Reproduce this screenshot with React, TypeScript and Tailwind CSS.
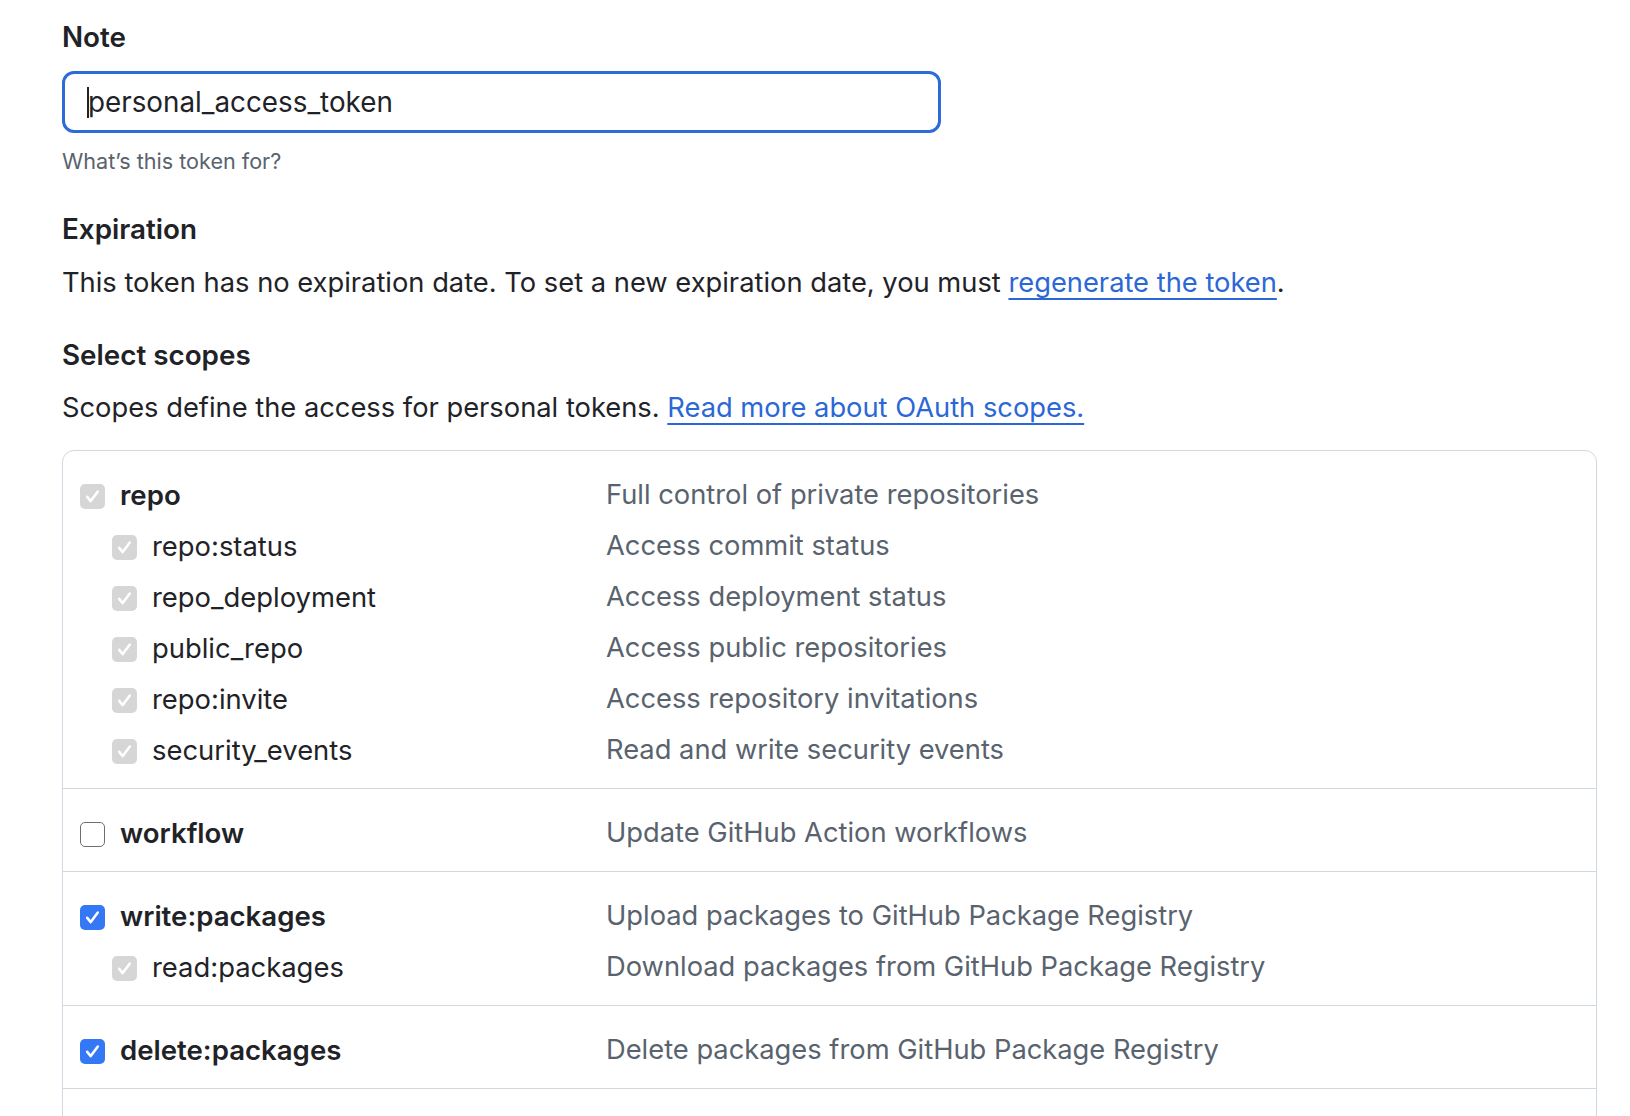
import React from 'react'

type CheckState = 'checked' | 'unchecked' | 'disabled'

type Scope = {
  name: string
  description: string
  state: CheckState
  children?: { name: string; description: string }[]
}

const scopes: Scope[] = [
  {
    name: 'repo',
    description: 'Full control of private repositories',
    state: 'disabled',
    children: [
      { name: 'repo:status', description: 'Access commit status' },
      { name: 'repo_deployment', description: 'Access deployment status' },
      { name: 'public_repo', description: 'Access public repositories' },
      { name: 'repo:invite', description: 'Access repository invitations' },
      { name: 'security_events', description: 'Read and write security events' },
    ],
  },
  { name: 'workflow', description: 'Update GitHub Action workflows', state: 'unchecked' },
  {
    name: 'write:packages',
    description: 'Upload packages to GitHub Package Registry',
    state: 'checked',
    children: [{ name: 'read:packages', description: 'Download packages from GitHub Package Registry' }],
  },
  { name: 'delete:packages', description: 'Delete packages from GitHub Package Registry', state: 'checked' },
]

function Checkbox({ state }: { state: CheckState }) {
  if (state === 'unchecked') {
    return <span className="block mt-[3px] w-[25px] h-[25px] rounded-[5px] border-[1.5px] border-[#6e6e6e] bg-white" />
  }
  return (
    <span
      className={
        state === 'checked'
          ? 'flex mt-[3px] items-center justify-center w-[25px] h-[25px] rounded-[5px] bg-[#3478f6]'
          : 'flex mt-[3px] items-center justify-center w-[25px] h-[25px] rounded-[5px] bg-[#d6d6d6]'
      }
    >
      <svg width="17" height="17" viewBox="0 0 24 24" fill="none">
        <path d="M4.5 12.5 L9.5 18.5 L19.5 5" stroke="white" strokeWidth="3.6" strokeLinecap="round" strokeLinejoin="round" />
      </svg>
    </span>
  )
}

function ScopeRow({ name, description, state, child }: { name: string; description: string; state: CheckState; child?: boolean }) {
  return (
    <div className="grid grid-cols-[526px_1fr] h-[51px] items-center">
      <label className={child ? 'flex items-center gap-[15px] pl-[32px]' : 'flex items-center gap-[15px]'}>
        <Checkbox state={state} />
        <span className={child ? 'text-[27.4px] text-[#1f2328]' : 'text-[27.6px] font-semibold text-[#1f2328]'}>{name}</span>
      </label>
      <span className="text-[27.3px] text-[#59636e]">{description}</span>
    </div>
  )
}

export default function App() {
  return (
    <div className="h-screen overflow-hidden bg-white text-[27.3px] leading-[40px] text-[#1f2328]" style={{ fontFamily: 'Inter, "Noto Sans", sans-serif' }}>
      <div className="pl-[62px] pr-[33px] pt-[17px]">
        <label className="block text-[27.8px] font-semibold">Note</label>
        <div className="mt-[14px] w-[879px] h-[62px] rounded-[12px] border-[3px] border-[#2c6bd8] flex items-center pl-[22px]">
          <span className="w-[2px] h-[31px] bg-[#1f2328] mr-[-1px]" />
          <span className="text-[27.8px]">personal_access_token</span>
        </div>
        <p className="mt-[12px] text-[21.6px] leading-[32px] text-[#59636e]">What’s this token for?</p>

        <h3 className="mt-[32px] text-[27.8px] font-semibold">Expiration</h3>
        <p className="mt-[14px]">
          This token has no expiration date. To set a new expiration date, you must{' '}
          <a href="#" className="text-[#2c67d6] underline underline-offset-[6px] decoration-[2px]">regenerate the token</a>.
        </p>

        <h3 className="mt-[32px] text-[27.8px] font-semibold">Select scopes</h3>
        <p className="mt-[13px]">
          Scopes define the access for personal tokens.{' '}
          <a href="#" className="text-[#2c67d6] underline underline-offset-[6px] decoration-[2px]">Read more about OAuth scopes.</a>
        </p>

        <div className="mt-[22px] border border-[#d1d9e0] rounded-[12px]">
          {scopes.map((scope, i) => (
            <div key={scope.name} className={i === 0 ? 'pt-[18px] pb-[13px] pl-[17px]' : 'pt-[18px] pb-[13px] pl-[17px] border-t border-[#d1d9e0]'}>
              <ScopeRow name={scope.name} description={scope.description} state={scope.state} />
              {scope.children?.map(c => (
                <ScopeRow key={c.name} name={c.name} description={c.description} state="disabled" child />
              ))}
            </div>
          ))}
          <div className="h-[60px] border-t border-[#d1d9e0]" />
        </div>
      </div>
    </div>
  )
}
